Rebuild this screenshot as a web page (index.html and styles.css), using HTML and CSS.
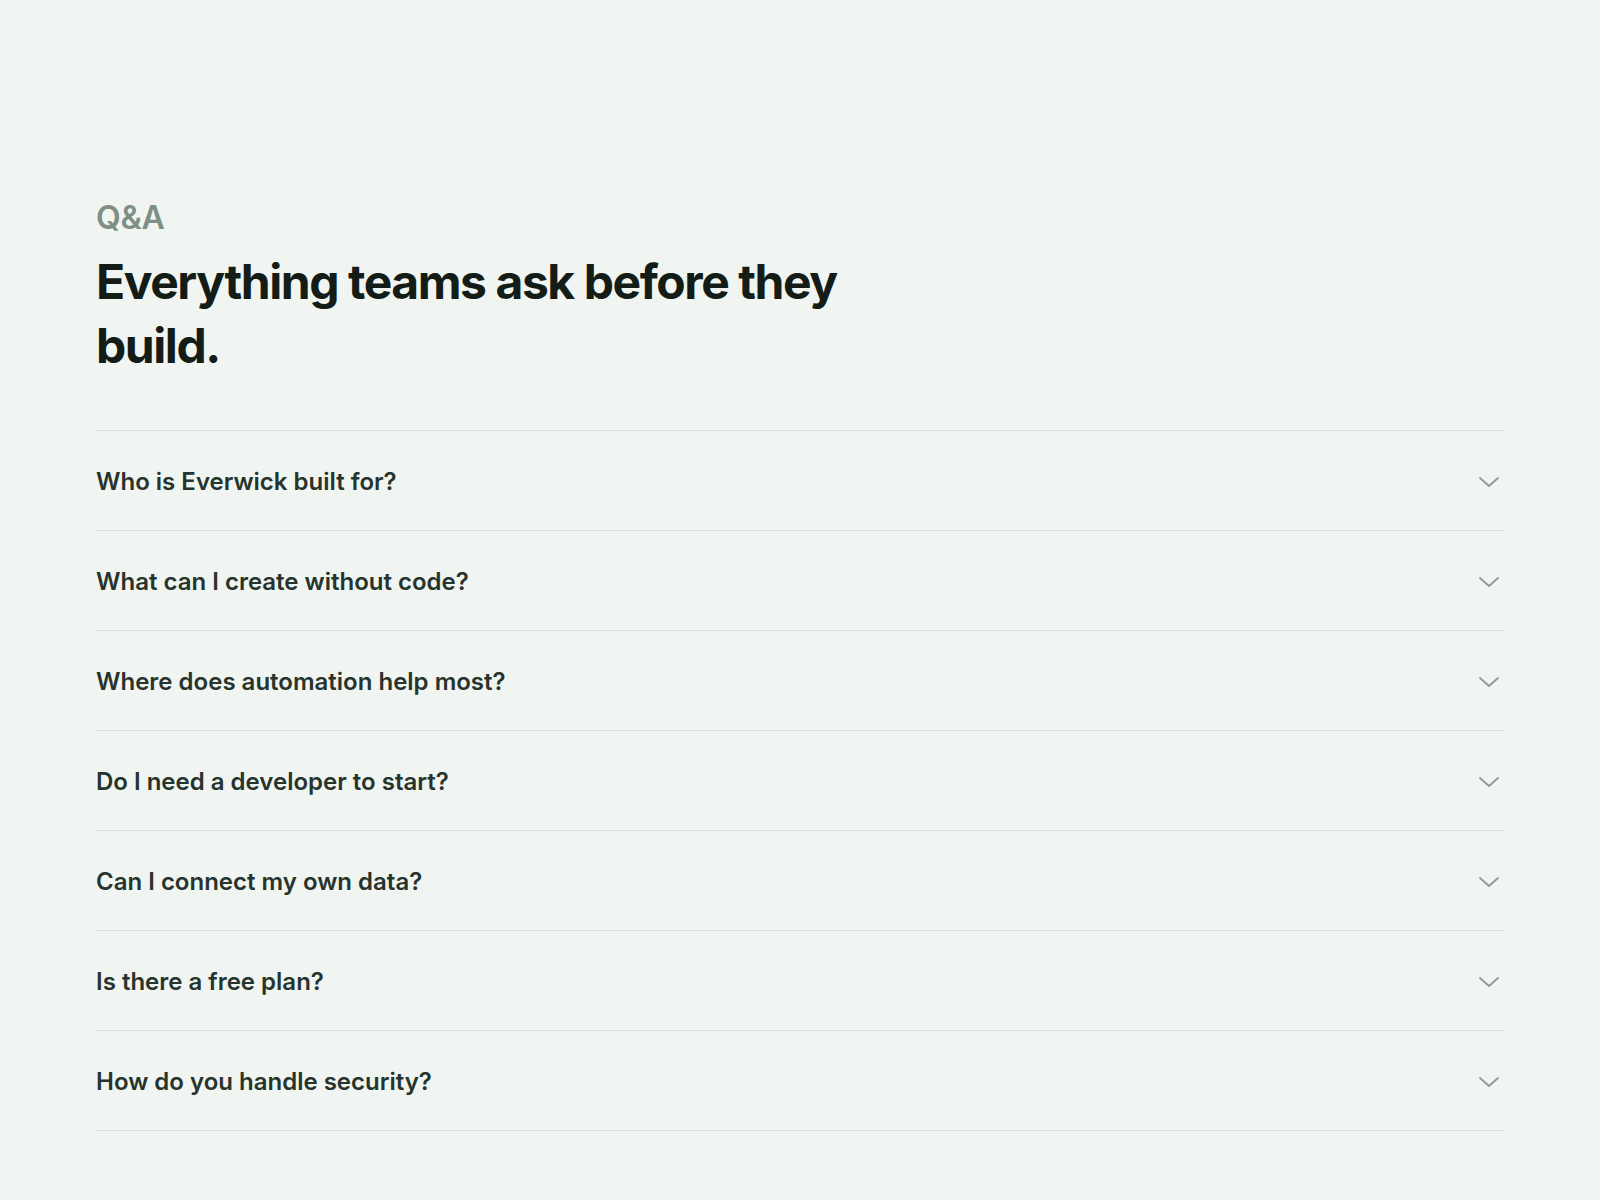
FILE: index.html
```html
<!DOCTYPE html>
<html lang="en">
<head>
<meta charset="utf-8">
<title>Q&amp;A</title>
<link rel="stylesheet" href="styles.css">
</head>
<body>
<section class="faq">
  <p class="faq-label">Q&amp;A</p>
  <h1 class="faq-title">Everything teams ask before they build.</h1>
  <ul class="faq-list">
    <li class="faq-item"><span class="faq-q">Who is Everwick built for?</span><svg class="chev" width="20" height="10" viewBox="0 0 20 10"><polyline points="1,1 10,9 19,1"/></svg></li>
    <li class="faq-item"><span class="faq-q">What can I create without code?</span><svg class="chev" width="20" height="10" viewBox="0 0 20 10"><polyline points="1,1 10,9 19,1"/></svg></li>
    <li class="faq-item"><span class="faq-q">Where does automation help most?</span><svg class="chev" width="20" height="10" viewBox="0 0 20 10"><polyline points="1,1 10,9 19,1"/></svg></li>
    <li class="faq-item"><span class="faq-q">Do I need a developer to start?</span><svg class="chev" width="20" height="10" viewBox="0 0 20 10"><polyline points="1,1 10,9 19,1"/></svg></li>
    <li class="faq-item"><span class="faq-q">Can I connect my own data?</span><svg class="chev" width="20" height="10" viewBox="0 0 20 10"><polyline points="1,1 10,9 19,1"/></svg></li>
    <li class="faq-item"><span class="faq-q">Is there a free plan?</span><svg class="chev" width="20" height="10" viewBox="0 0 20 10"><polyline points="1,1 10,9 19,1"/></svg></li>
    <li class="faq-item"><span class="faq-q">How do you handle security?</span><svg class="chev" width="20" height="10" viewBox="0 0 20 10"><polyline points="1,1 10,9 19,1"/></svg></li>
  </ul>
</section>
</body>
</html>
```
FILE: styles.css
```css
* { box-sizing: border-box; }
html, body {
  margin: 0;
  padding: 0;
  background: #f0f5f1;
}
body {
  font-family: Inter, "Noto Sans", sans-serif;
  min-height: 1200px;
}
.faq {
  padding: 199px 96px 0;
}
.faq-label {
  margin: 0;
  font-size: 32px;
  line-height: 1.2;
  font-weight: 600;
  color: #7f8f86;
  letter-spacing: -0.005em;
}
.faq-title {
  margin: 13px 0 0;
  max-width: 800px;
  font-size: 48px;
  line-height: 64px;
  font-weight: 700;
  color: #141c18;
  letter-spacing: -0.03em;
}
.faq-list {
  list-style: none;
  margin: 52px 0 0;
  padding: 0;
  border-bottom: 1px solid #d6ded9;
}
.faq-item {
  display: flex;
  align-items: center;
  justify-content: space-between;
  height: 100px;
  padding-top: 2px;
  border-top: 1px solid #d6ded9;
}
.faq-q {
  font-size: 24px;
  font-weight: 600;
  color: #27332d;
  letter-spacing: 0;
}
.chev {
  margin-right: 5px;
  fill: none;
  stroke: #8c9891;
  stroke-width: 1.7;
  stroke-linecap: round;
  stroke-linejoin: round;
}
```
